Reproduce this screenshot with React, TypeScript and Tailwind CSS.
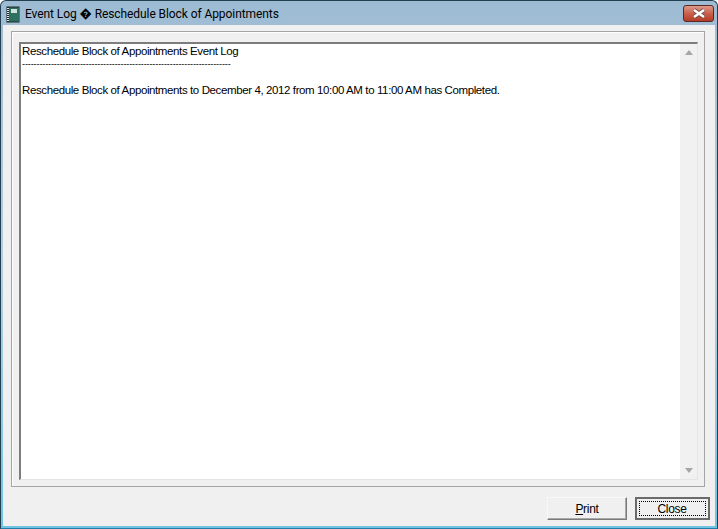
import * as React from "react";

const uiFont = "[font-family:'Liberation_Sans',Arial,sans-serif]";

function NotebookIcon(): React.ReactElement {
  return (
    <svg width="14" height="17" viewBox="0 0 14 17" className="shrink-0">
      <rect x="0.5" y="0.5" width="13" height="16" fill="#1c2b28" />
      <rect x="3" y="1.5" width="10" height="14" fill="#2f6f62" />
      <rect x="5" y="3" width="6" height="4" fill="#cfe3dc" />
      <path d="M1 2.5h2M1 4.5h2M1 6.5h2M1 8.5h2M1 10.5h2M1 12.5h2M1 14.5h2" stroke="#e4e4e4" strokeWidth="1" />
    </svg>
  );
}

function CloseGlyph(): React.ReactElement {
  return (
    <svg width="16" height="11" viewBox="0 0 16 11">
      <path d="M3 2 L13 9 M13 2 L3 9" stroke="#6b4a44" strokeWidth="4" />
      <path d="M3 2 L13 9 M13 2 L3 9" stroke="#ffffff" strokeWidth="2.6" />
    </svg>
  );
}

function Scrollbar(): React.ReactElement {
  return (
    <div className="flex w-[17px] shrink-0 flex-col items-center justify-between bg-[#f1f1f1] py-[6px]">
      <div className="h-0 w-0 border-x-4 border-b-[5px] border-x-transparent border-b-[#a6a6a6]" />
      <div className="h-0 w-0 border-x-4 border-t-[5px] border-x-transparent border-t-[#a6a6a6]" />
    </div>
  );
}

export default function App(): React.ReactElement {
  return (
    <div className={`h-[529px] w-[718px] overflow-hidden rounded-t-[6px] border border-[#22404f] border-b-[#1f7fa8] bg-gradient-to-b from-[#9dbbd3] via-[#b4cfe4] to-[#6fc3e2] ${uiFont}`}>
      <div className="flex h-[24px] items-start justify-between pl-[5px] pr-[3px]">
        <div className="flex items-center gap-[5px] pt-[5px]">
          <NotebookIcon />
          <span className="text-[12px] leading-[17px] tracking-[-0.08px] text-black [font-family:Roboto,sans-serif]">
            Event Log � Reschedule Block of Appointments
          </span>
        </div>
        <div className="mt-[4px] flex h-[17px] w-[31px] items-center justify-center rounded-[3px] border border-[#5a2a22] bg-gradient-to-b from-[#dc9a8c] via-[#c9604c] to-[#b53c26]">
          <CloseGlyph />
        </div>
      </div>

      <div className="mx-[2px] flex h-[501px] flex-col bg-[#f0f0f0] pl-[8px] pr-[5px] pt-[6px]">
        <div className="flex h-[456px] w-[694px] border border-[#a5a5a5] pl-[7px] pr-[6px] pt-[10px] pb-[6px] shadow-[inset_1px_1px_0_#fff]">
          <div className="flex min-w-0 flex-1 border-l-2 border-t-2 border-r border-b border-[#7d7d7d] border-r-[#e4e4e4] border-b-[#e4e4e4] bg-white">
            <div className="flex-1 pl-[1px] pt-[1px] text-[11.5px] leading-[13px] tracking-[-0.39px] text-black">
              <div>Reschedule Block of Appointments Event Log</div>
              <div className="h-[13px] overflow-hidden whitespace-nowrap text-[9px] tracking-[-0.1px]">
                ------------------------------------------------------------------------
              </div>
              <div className="h-[13px]" />
              <div>Reschedule Block of Appointments to December 4, 2012 from 10:00 AM to 11:00 AM has Completed.</div>
            </div>
            <Scrollbar />
          </div>
        </div>

        <div className="flex justify-end gap-[8px] pt-[10px] text-[12px] tracking-[-0.3px] text-black">
          <button className="h-[23px] w-[80px] border border-[#f8f8f8] border-r-[#7a7a7a] border-b-[#7a7a7a] bg-[#f0f0f0] shadow-[inset_-1px_-1px_0_#a8a8a8]">
            <span className="underline">P</span>rint
          </button>
          <div className="h-[23px] w-[75px] border-2 border-[#6a6a6a] bg-[#f0f0f0] p-[2px]">
            <div className="flex h-full items-center justify-center border border-dotted border-black pr-[1px]">Close</div>
          </div>
        </div>
      </div>
    </div>
  );
}
